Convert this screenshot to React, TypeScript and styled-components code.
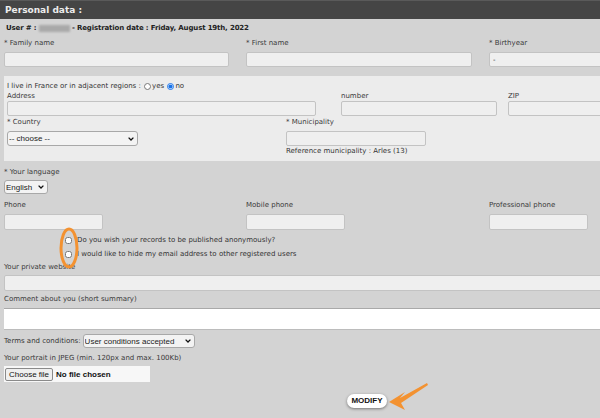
import React from "react";
import styled, { createGlobalStyle } from "styled-components";

const GlobalStyle = createGlobalStyle`
  html, body { margin: 0; padding: 0; background: #d3d3d3; overflow: hidden; }
  body { font-family: "DejaVu Sans", Verdana, sans-serif; font-size: 7px; color: #333; }
  * { box-sizing: border-box; }
`;

const Page = styled.div`
  position: relative;
  width: 734px;
  min-height: 418px;
  background: #d3d3d3;
`;

const Header = styled.div`
  height: 19px;
  line-height: 19px;
  background: #454545;
  border-top: 1px solid #5a5a5a;
  color: #ececec;
  font-weight: bold;
  font-size: 9px;
  padding-left: 5px;
`;

const UserLine = styled.div`
  height: 18px;
  line-height: 18px;
  padding-left: 6px;
  font-weight: bold;
  color: #222;
  display: flex;
  align-items: center;
  white-space: pre;
  letter-spacing: -0.15px;
`;

const Blur = styled.span`
  display: inline-block;
  width: 31px;
  height: 7px;
  background: #a9a9a9;
  filter: blur(0.8px);
`;

const Grid3 = styled.div<{ $mt?: number }>`
  display: grid;
  grid-template-columns: 242px 243px 1fr;
  padding-left: 4px;
  margin-top: ${(p) => p.$mt ?? 0}px;
`;

const Field = styled.div`
  display: flex;
  flex-direction: column;
  align-items: flex-start;
`;

const Label = styled.div<{ $h?: number; $mb?: number; $mt?: number }>`
  height: ${(p) => p.$h ?? 12}px;
  line-height: ${(p) => p.$h ?? 12}px;
  margin-top: ${(p) => p.$mt ?? 0}px;
  margin-bottom: ${(p) => p.$mb ?? 3}px;
  color: #3a3a3a;
  white-space: nowrap;
`;

const TextInput = styled.input<{ $w: number; $h?: number }>`
  display: block;
  width: ${(p) => p.$w}px;
  height: ${(p) => p.$h ?? 15}px;
  background: #efefef;
  border: 1px solid #c3c3c3;
  border-radius: 2px;
  padding: 0 3px;
  margin: 0;
  font-family: "DejaVu Sans", sans-serif;
  font-size: 7px;
  color: #222;
  outline: none;
`;

const Panel = styled.div`
  margin: 9px 0 0 4px;
  background: #ececec;
  padding: 4px 3px 5px 3px;
`;

const RadioLine = styled.div`
  height: 12px;
  display: flex;
  align-items: center;
  color: #333;
  white-space: pre;
`;

const Radio = styled.input`
  width: 7px;
  height: 7px;
  margin: 0 1px 0 1px;
  accent-color: #1a73e8;
`;

const Row = styled.div`
  display: flex;
  align-items: flex-start;
`;

const Col = styled.div<{ $w?: number }>`
  display: flex;
  flex-direction: column;
  align-items: flex-start;
  ${(p) => (p.$w ? `width: ${p.$w}px; flex: none;` : "flex: 1;")}
`;

const SelectWrap = styled.div<{ $w: number; $h?: number }>`
  position: relative;
  width: ${(p) => p.$w}px;
  height: ${(p) => p.$h ?? 15}px;
  flex: none;
`;

const SelectBox = styled.select`
  appearance: none;
  -webkit-appearance: none;
  width: 100%;
  height: 100%;
  font-family: "Liberation Sans", Arial, sans-serif;
  font-size: 8px;
  color: #222;
  background: #f3f3f3;
  border: 1px solid #a8a8a8;
  border-radius: 3px;
  padding: 0 9px 0 1px;
  margin: 0;
  outline: none;
`;

const Chevron = styled.svg`
  position: absolute;
  right: 4px;
  top: 50%;
  margin-top: -2px;
  pointer-events: none;
`;

const Select = ({ w, h, value }: { w: number; h?: number; value: string }) => (
  <SelectWrap $w={w} $h={h}>
    <SelectBox defaultValue={value}>
      <option>{value}</option>
    </SelectBox>
    <Chevron width="6" height="4" viewBox="0 0 6 4">
      <path d="M0.6 0.6 L3 3 L5.4 0.6" fill="none" stroke="#111" strokeWidth="1.3" />
    </Chevron>
  </SelectWrap>
);

const Note = styled.div`
  height: 10px;
  line-height: 10px;
  color: #333;
  white-space: nowrap;
`;

const Section = styled.div<{ $mt?: number }>`
  padding-left: 4px;
  margin-top: ${(p) => p.$mt ?? 0}px;
  display: flex;
  flex-direction: column;
  align-items: flex-start;
`;

const CheckRow = styled.label`
  height: 14px;
  display: flex;
  align-items: center;
  padding-left: 61px;
  color: #333;
  white-space: nowrap;
`;

const Check = styled.input`
  width: 7px;
  height: 7px;
  margin: 0 5px 0 0;
`;

const TextArea = styled.textarea`
  display: block;
  width: 730px;
  height: 22px;
  background: #fff;
  border: none;
  border-top: 1px solid #a9a9a9;
  border-bottom: 1px solid #bcbcbc;
  resize: none;
  margin: 0;
`;

const TermsRow = styled.div`
  display: flex;
  align-items: center;
  gap: 2px;
  height: 14px;
  margin-top: 4px;
  color: #333;
  white-space: nowrap;
`;

const FileBox = styled.div`
  width: 146px;
  height: 16px;
  background: #f7f7f7;
  display: flex;
  align-items: center;
  padding-left: 1px;
  font-family: "Liberation Sans", Arial, sans-serif;
  font-size: 8px;
  font-weight: bold;
  color: #111;
  gap: 3px;
`;

const FileButton = styled.span`
  display: inline-block;
  height: 13px;
  line-height: 11px;
  padding: 0 3px;
  background: #efefef;
  border: 1px solid #8a8a8a;
  border-radius: 2px;
  font-weight: normal;
  color: #111;
`;

const ButtonRow = styled.div`
  display: flex;
  justify-content: center;
  margin-top: 12px;
`;

const ModifyButton = styled.button`
  height: 14px;
  padding: 0 4px;
  background: #fff;
  border: none;
  border-radius: 7px;
  box-shadow: 0 1px 3px rgba(0, 0, 0, 0.45);
  font-family: "Liberation Sans", Arial, sans-serif;
  font-weight: bold;
  font-size: 8px;
  color: #111;
  line-height: 14px;
`;

const Overlay = styled.svg`
  position: absolute;
  left: 0;
  top: 0;
  pointer-events: none;
`;

export default function App() {
  return (
    <Page>
      <GlobalStyle />
      <Header>Personal data :</Header>
      <UserLine>
        {"User # : "}
        <Blur />
        {" - Registration date : Friday, August 19th, 2022"}
      </UserLine>

      <Grid3>
        <Field>
          <Label>* Family name</Label>
          <TextInput $w={225} />
        </Field>
        <Field>
          <Label>* First name</Label>
          <TextInput $w={226} />
        </Field>
        <Field>
          <Label>* Birthyear</Label>
          <TextInput $w={225} defaultValue="-" />
        </Field>
      </Grid3>

      <Panel>
        <RadioLine>
          {"I live in France or in adjacent regions : "}
          <Radio type="radio" name="fr" />
          {"yes "}
          <Radio type="radio" name="fr" defaultChecked />
          {"no"}
        </RadioLine>
        <Row>
          <Col $w={334}>
            <Label $h={9} $mb={0}>Address</Label>
            <TextInput $w={309} />
          </Col>
          <Col $w={167}>
            <Label $h={9} $mb={0}>number</Label>
            <TextInput $w={156} />
          </Col>
          <Col>
            <Label $h={9} $mb={0}>ZIP</Label>
            <TextInput $w={156} />
          </Col>
        </Row>
        <Row>
          <Col $w={279}>
            <Label $h={10} $mb={4} $mt={1}>* Country</Label>
            <Select w={131} value="-- choose --" />
          </Col>
          <Col>
            <Label $h={10} $mb={4} $mt={1}>* Municipality</Label>
            <TextInput $w={140} />
            <Note>Reference municipality : Arles (13)</Note>
          </Col>
        </Row>
      </Panel>

      <Section $mt={5}>
        <Label $mb={2}>* Your language</Label>
        <Select w={44} h={14} value="English" />
      </Section>

      <Grid3 $mt={5}>
        <Field>
          <Label>Phone</Label>
          <TextInput $w={99} $h={16} />
        </Field>
        <Field>
          <Label>Mobile phone</Label>
          <TextInput $w={99} $h={16} />
        </Field>
        <Field>
          <Label>Professional phone</Label>
          <TextInput $w={99} $h={16} />
        </Field>
      </Grid3>

      <Section $mt={3}>
        <CheckRow>
          <Check type="checkbox" />
          Do you wish your records to be published anonymously?
        </CheckRow>
        <CheckRow>
          <Check type="checkbox" />
          I would like to hide my email address to other registered users
        </CheckRow>
        <Label $mb={2}>Your private website</Label>
        <TextInput $w={730} $h={16} />
        <Label $mb={3} $mt={2}>Comment about you (short summary)</Label>
        <TextArea />
        <TermsRow>
          Terms and conditions:
          <Select w={112} h={14} value="User conditions accepted" />
        </TermsRow>
        <Label $mb={2} $mt={4}>Your portrait in JPEG (min. 120px and max. 100Kb)</Label>
        <FileBox>
          <FileButton>Choose file</FileButton>
          No file chosen
        </FileBox>
      </Section>

      <ButtonRow>
        <ModifyButton>MODIFY</ModifyButton>
      </ButtonRow>

      <Overlay width="734" height="418" viewBox="0 0 734 418">
        <ellipse cx="69" cy="248" rx="8" ry="19" fill="none" stroke="#f39231" strokeWidth="3" />
        <polygon
          points="427,383 400,398 405,392 389,402 405,410 401,403 428,385"
          fill="#f39231"
        />
      </Overlay>
    </Page>
  );
}
